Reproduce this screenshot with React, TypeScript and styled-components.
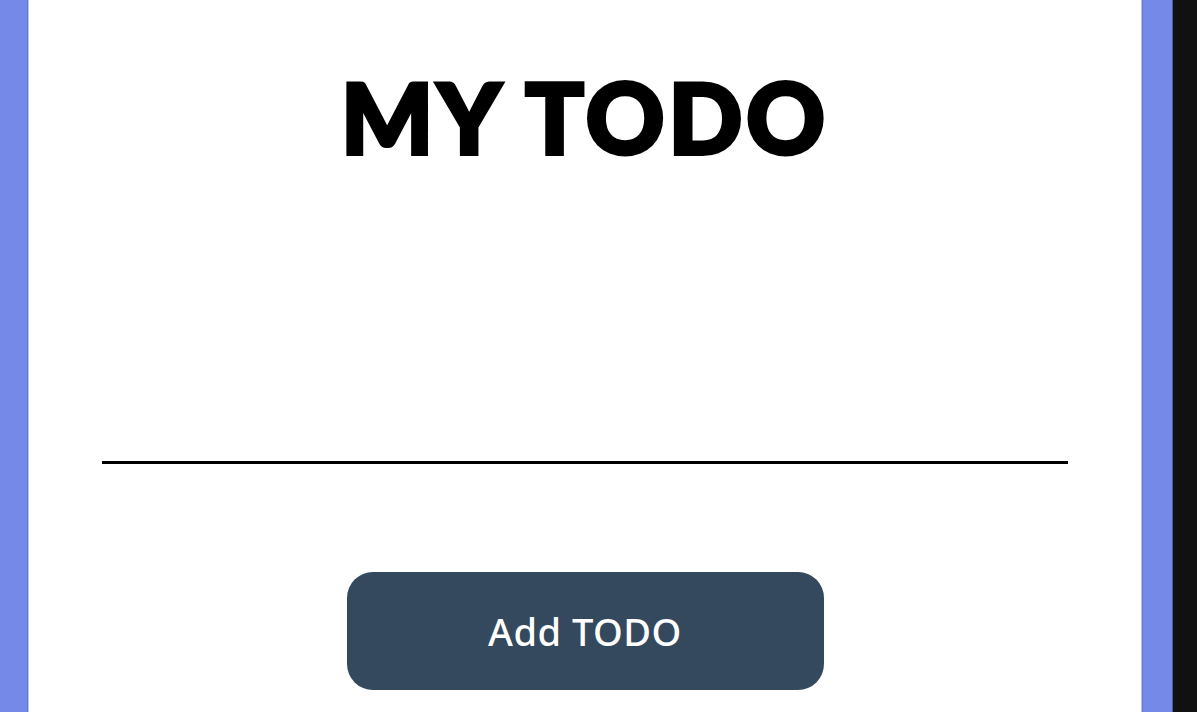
import React from "react";
import styled, { createGlobalStyle } from "styled-components";

const Global = createGlobalStyle`
  html, body { margin: 0; padding: 0; height: 100%; }
  body { background: #111111; font-family: Lato, "Noto Sans", sans-serif; }
  #root { height: 100%; }
`;

const Shell = styled.div`
  display: flex;
  height: 712px;
  overflow: hidden;
`;

const SideStrip = styled.div<{ $w: number; $edge: "left" | "right" }>`
  width: ${(p) => p.$w}px;
  flex: none;
  background: #7589e9;
  ${(p) =>
    p.$edge === "left"
      ? "box-shadow: inset -1px 0 0 #6478e0;"
      : "box-shadow: inset 1px 0 0 #6478e0, inset -1px 0 0 #4a5aa8;"}
`;

const Edge = styled.div`
  width: 1px;
  flex: none;
  background: #b9c3f3;
`;

const Dark = styled.div`
  flex: 1;
  background: #111111;
`;

const Panel = styled.main`
  width: 1112px;
  flex: none;
  background: #ffffff;
  display: flex;
  flex-direction: column;
  align-items: center;
`;

const Title = styled.h1`
  margin: 62px 0 0;
  font-family: Lato, Inter, sans-serif;
  font-weight: 900;
  font-size: 97px;
  line-height: 110px;
  letter-spacing: 4px;
  color: #000;
  -webkit-text-stroke: 4px #000;
`;

const Input = styled.input`
  margin-top: 242px;
  width: 966px;
  height: 50px;
  box-sizing: border-box;
  border: none;
  border-bottom: 3px solid #000;
  outline: none;
  background: transparent;
  font-family: Lato, sans-serif;
  font-size: 30px;
`;

const AddButton = styled.button`
  margin-top: 108px;
  width: 477px;
  height: 118px;
  border: none;
  border-radius: 26px;
  background: #34495e;
  color: #fff;
  font-family: "Noto Sans", sans-serif;
  font-weight: 500;
  font-size: 38px;
  letter-spacing: 0.5px;
  cursor: pointer;
`;

export default function App() {
  return (
    <>
      <Global />
      <Shell>
        <SideStrip $w={28} $edge="left" />
        <Edge />
        <Panel>
          <Title>MY TODO</Title>
          <Input aria-label="todo" />
          <AddButton>Add TODO</AddButton>
        </Panel>
        <Edge />
        <SideStrip $w={31} $edge="right" />
        <Dark />
      </Shell>
    </>
  );
}
